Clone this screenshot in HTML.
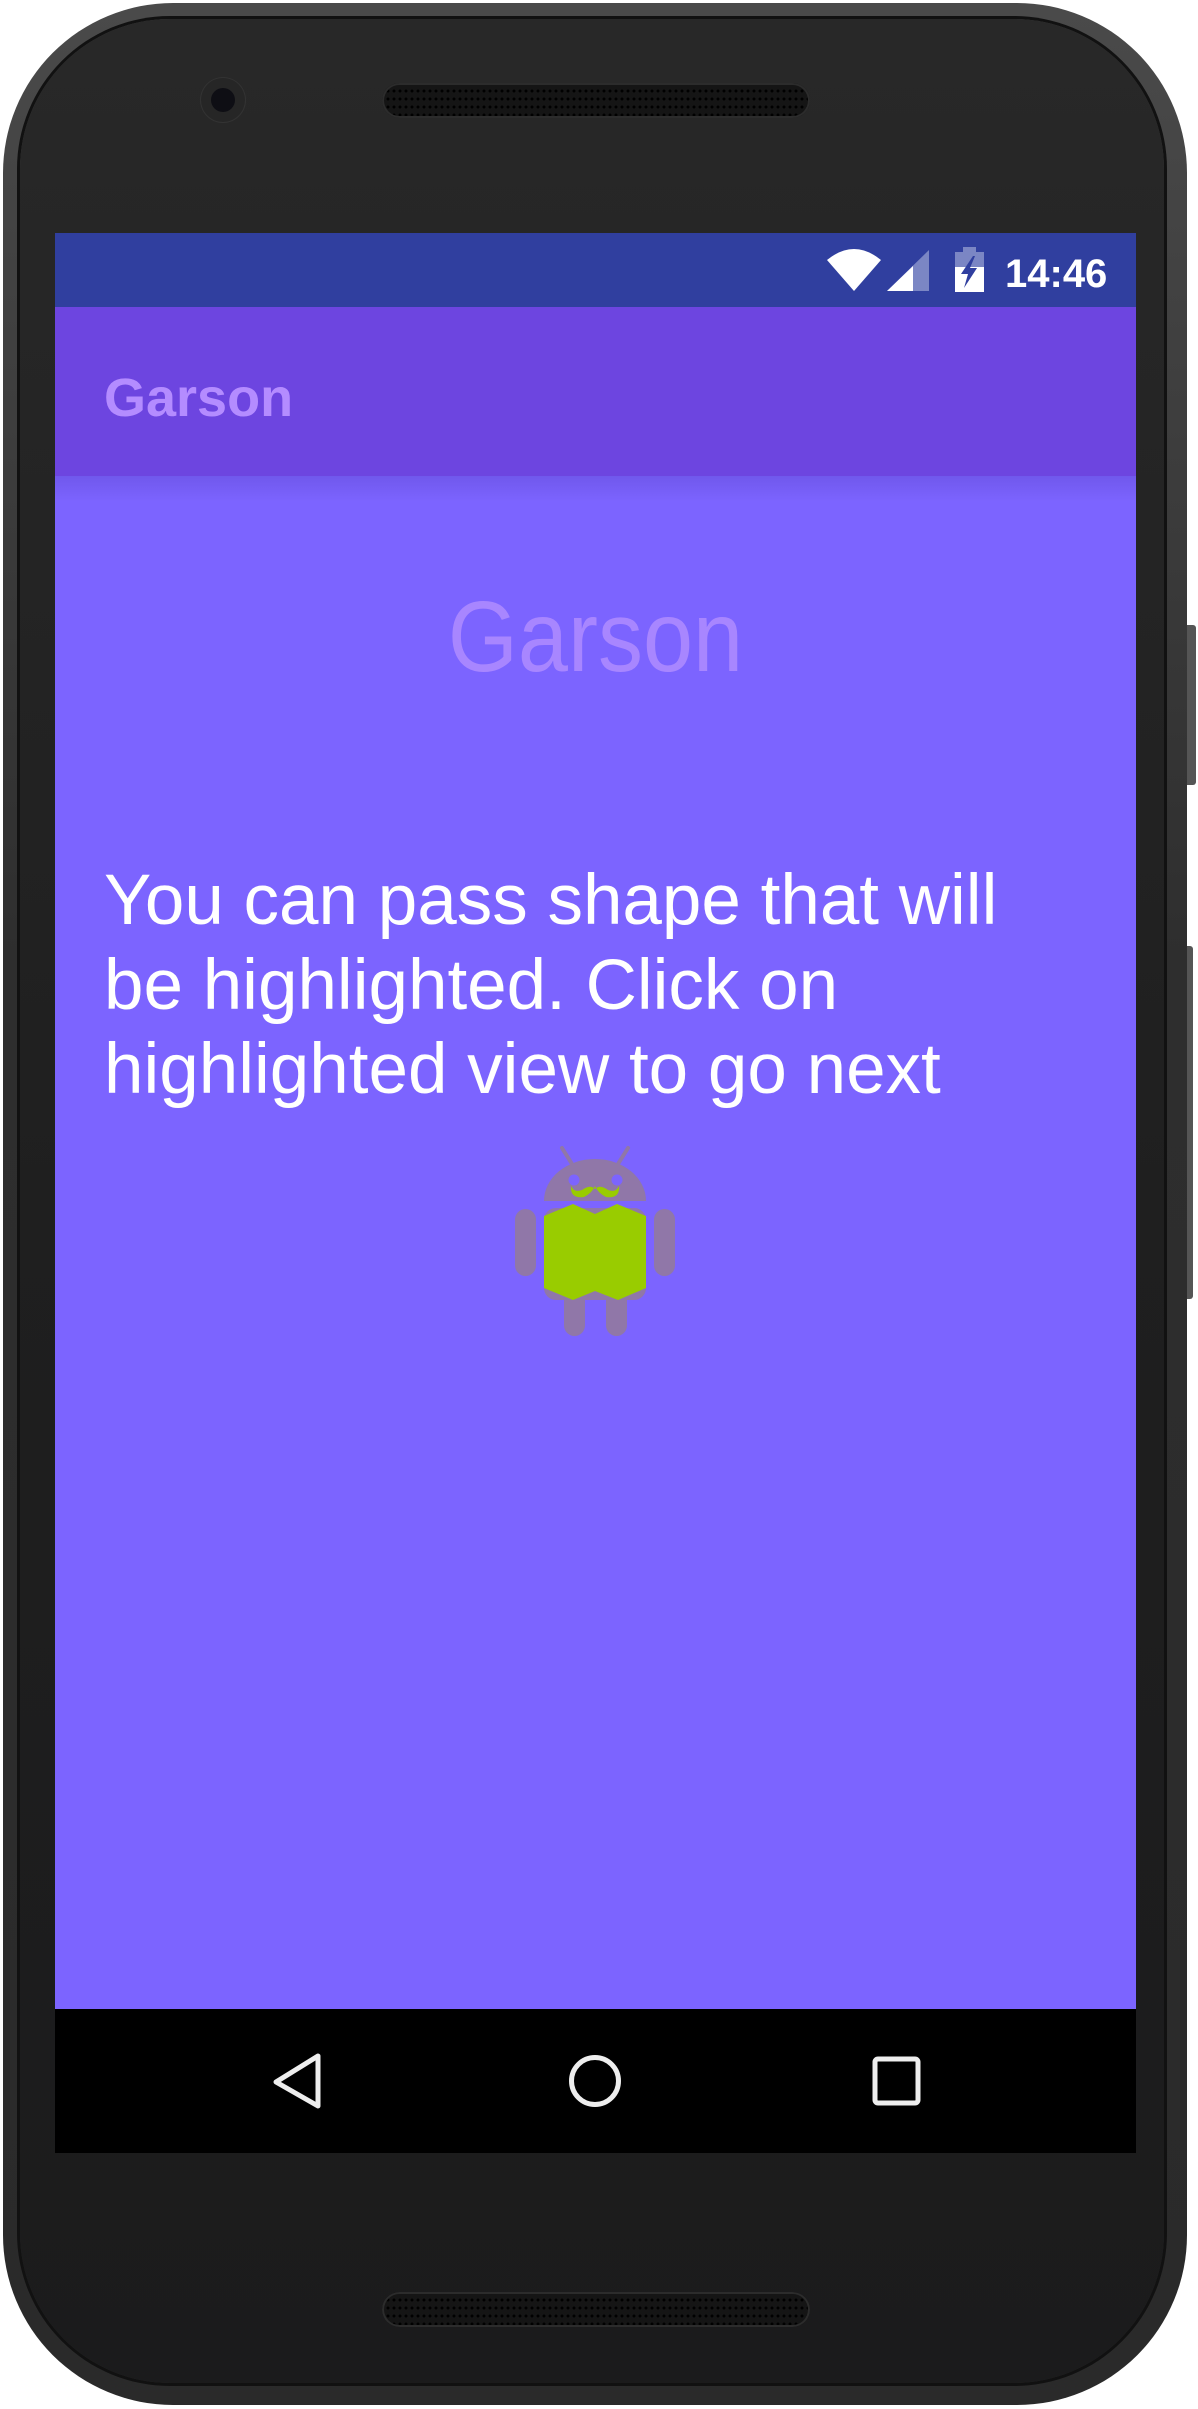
<!DOCTYPE html>
<html><head><meta charset="utf-8">
<style>
html,body{margin:0;padding:0;background:#fff;}
body{width:1198px;height:2409px;position:relative;overflow:hidden;font-family:"Liberation Sans",sans-serif;}
.abs{position:absolute;}
#phone{left:3px;top:3px;width:1184px;height:2402px;border-radius:170px;background:linear-gradient(#4a4a4a,#2e2e2e 40%,#2a2a2a);}
#face{left:20px;top:19px;width:1144px;height:2364px;border-radius:150px;background:linear-gradient(#282828,#1f1f1f 50%,#1b1b1c);box-shadow:0 0 0 3px #111;}
.btn{background:#555;border-radius:0 3px 3px 0;width:9px;left:1187px;}
#status{left:55px;top:233px;width:1081px;height:75px;background:#303f9f;}
#appbar{left:55px;top:307px;width:1081px;height:169px;background:#6d45e0;}
#content{left:55px;top:476px;width:1081px;height:1533px;background:#7c64ff;overflow:hidden;}
#nav{left:55px;top:2009px;width:1081px;height:144px;background:#000;}
.spk{left:382px;width:428px;height:35px;border-radius:18px;background:#151515;box-shadow:inset 0 0 0 2px #2c2c2c;
background-image:radial-gradient(circle,#000 1.3px,transparent 1.6px);background-size:6px 8px;background-position:3px 4px;}
</style></head><body>
<div id="phone" class="abs"></div>
<div class="abs btn" style="top:625px;height:160px;"></div>
<div class="abs btn" style="top:946px;height:353px;width:6px;"></div>
<div id="face" class="abs"></div>
<div class="abs" style="left:201px;top:78px;width:44px;height:44px;border-radius:50%;background:#262626;box-shadow:0 0 0 1px #333;"></div>
<div class="abs" style="left:211px;top:88px;width:24px;height:24px;border-radius:50%;background:#0e0e14;"></div>
<div class="abs spk" style="top:83px;"></div>
<div class="abs spk" style="top:2292px;"></div>

<div id="status" class="abs">
<svg class="abs" style="left:0;top:0" width="1081" height="75" viewBox="55 233 1081 75">
<path d="M827 260 Q854 238 881 260 L854 291 Z" fill="#fff"/>
<path d="M887 291 L929 250 L929 291 Z" fill="#7b86c4"/>
<path d="M887 291 L913 266 L913 291 Z" fill="#fff"/>
<rect x="963" y="247" width="13" height="5" fill="#7b86c4"/>
<rect x="955" y="252" width="29" height="15" fill="#7b86c4"/>
<rect x="955" y="267" width="29" height="25" fill="#fff"/>
<path d="M973 256 L961 274 L968 274 L964 288 L977 268 L970 268 L975 256 Z" fill="#303f9f"/>
<text x="1005" y="287" fill="#fff" font-size="40" font-weight="bold" font-family="Liberation Sans">14:46</text>
</svg>
</div>
<div id="appbar" class="abs">
<div class="abs" style="left:49px;top:61px;font-size:54px;font-weight:bold;color:#b48cff;line-height:60px;">Garson</div>
</div>
<div id="content" class="abs">
<div class="abs" style="left:0;top:0;width:100%;height:26px;background:linear-gradient(#7058ec,rgba(124,100,255,0));"></div>
<div class="abs" style="left:0;width:100%;top:106px;text-align:center;font-size:100px;line-height:110px;color:#a886ff;transform:scaleX(0.9);">Garson</div>
<div class="abs" style="left:49px;top:383px;font-size:71px;line-height:84.5px;color:#fff;white-space:nowrap;">You can pass shape that will<br>be highlighted. Click on<br>highlighted view to go next</div>
<svg class="abs" style="left:0;top:0" width="1081" height="1533" viewBox="55 476 1081 1533">
<g fill="#9077a8">
<line x1="562" y1="1148" x2="572" y2="1164" stroke="#9077a8" stroke-width="4" stroke-linecap="round"/>
<line x1="628" y1="1148" x2="618" y2="1164" stroke="#9077a8" stroke-width="4" stroke-linecap="round"/>
<path d="M544 1201 A51 42 0 0 1 646 1201 Z"/>
<rect x="544" y="1208" width="102" height="92" rx="12"/>
<rect x="515" y="1209" width="21" height="67" rx="10.5"/>
<rect x="654" y="1209" width="21" height="67" rx="10.5"/>
<rect x="564" y="1280" width="21" height="56" rx="10.5"/>
<rect x="606" y="1280" width="21" height="56" rx="10.5"/>
</g>
<circle cx="574" cy="1180" r="5.5" fill="#7c64ff"/>
<circle cx="617" cy="1180" r="5.5" fill="#7c64ff"/>
<path d="M571 1186 Q570 1199 584 1197 Q592 1193 595 1186 Q598 1193 606 1197 Q620 1199 619 1186 Q616 1193 608 1190 Q600 1184 595 1189 Q590 1184 582 1190 Q574 1193 571 1186 Z" fill="#99cc00"/>
<path d="M560 1213 L573 1204 L584 1211 Z M606 1211 L617 1204 L630 1213 Z" fill="#6aa0ff"/>
<path d="M544 1216 L573 1204 L595 1214 L617 1204 L646 1216 L646 1288 L618 1300 L595 1291 L573 1300 L544 1288 Z" fill="#99cc00"/>
</svg>
</div>
<div id="nav" class="abs">
<svg class="abs" style="left:0;top:0" width="1081" height="144" viewBox="55 2009 1081 144">
<path d="M318 2056 L318 2106 L276 2082 Z" fill="none" stroke="#eee" stroke-width="5" stroke-linejoin="round"/>
<circle cx="595" cy="2081" r="23.5" fill="none" stroke="#eee" stroke-width="5"/>
<rect x="875" y="2059" width="43" height="44" rx="3" fill="none" stroke="#eee" stroke-width="5"/>
</svg>
</div>
</body></html>
